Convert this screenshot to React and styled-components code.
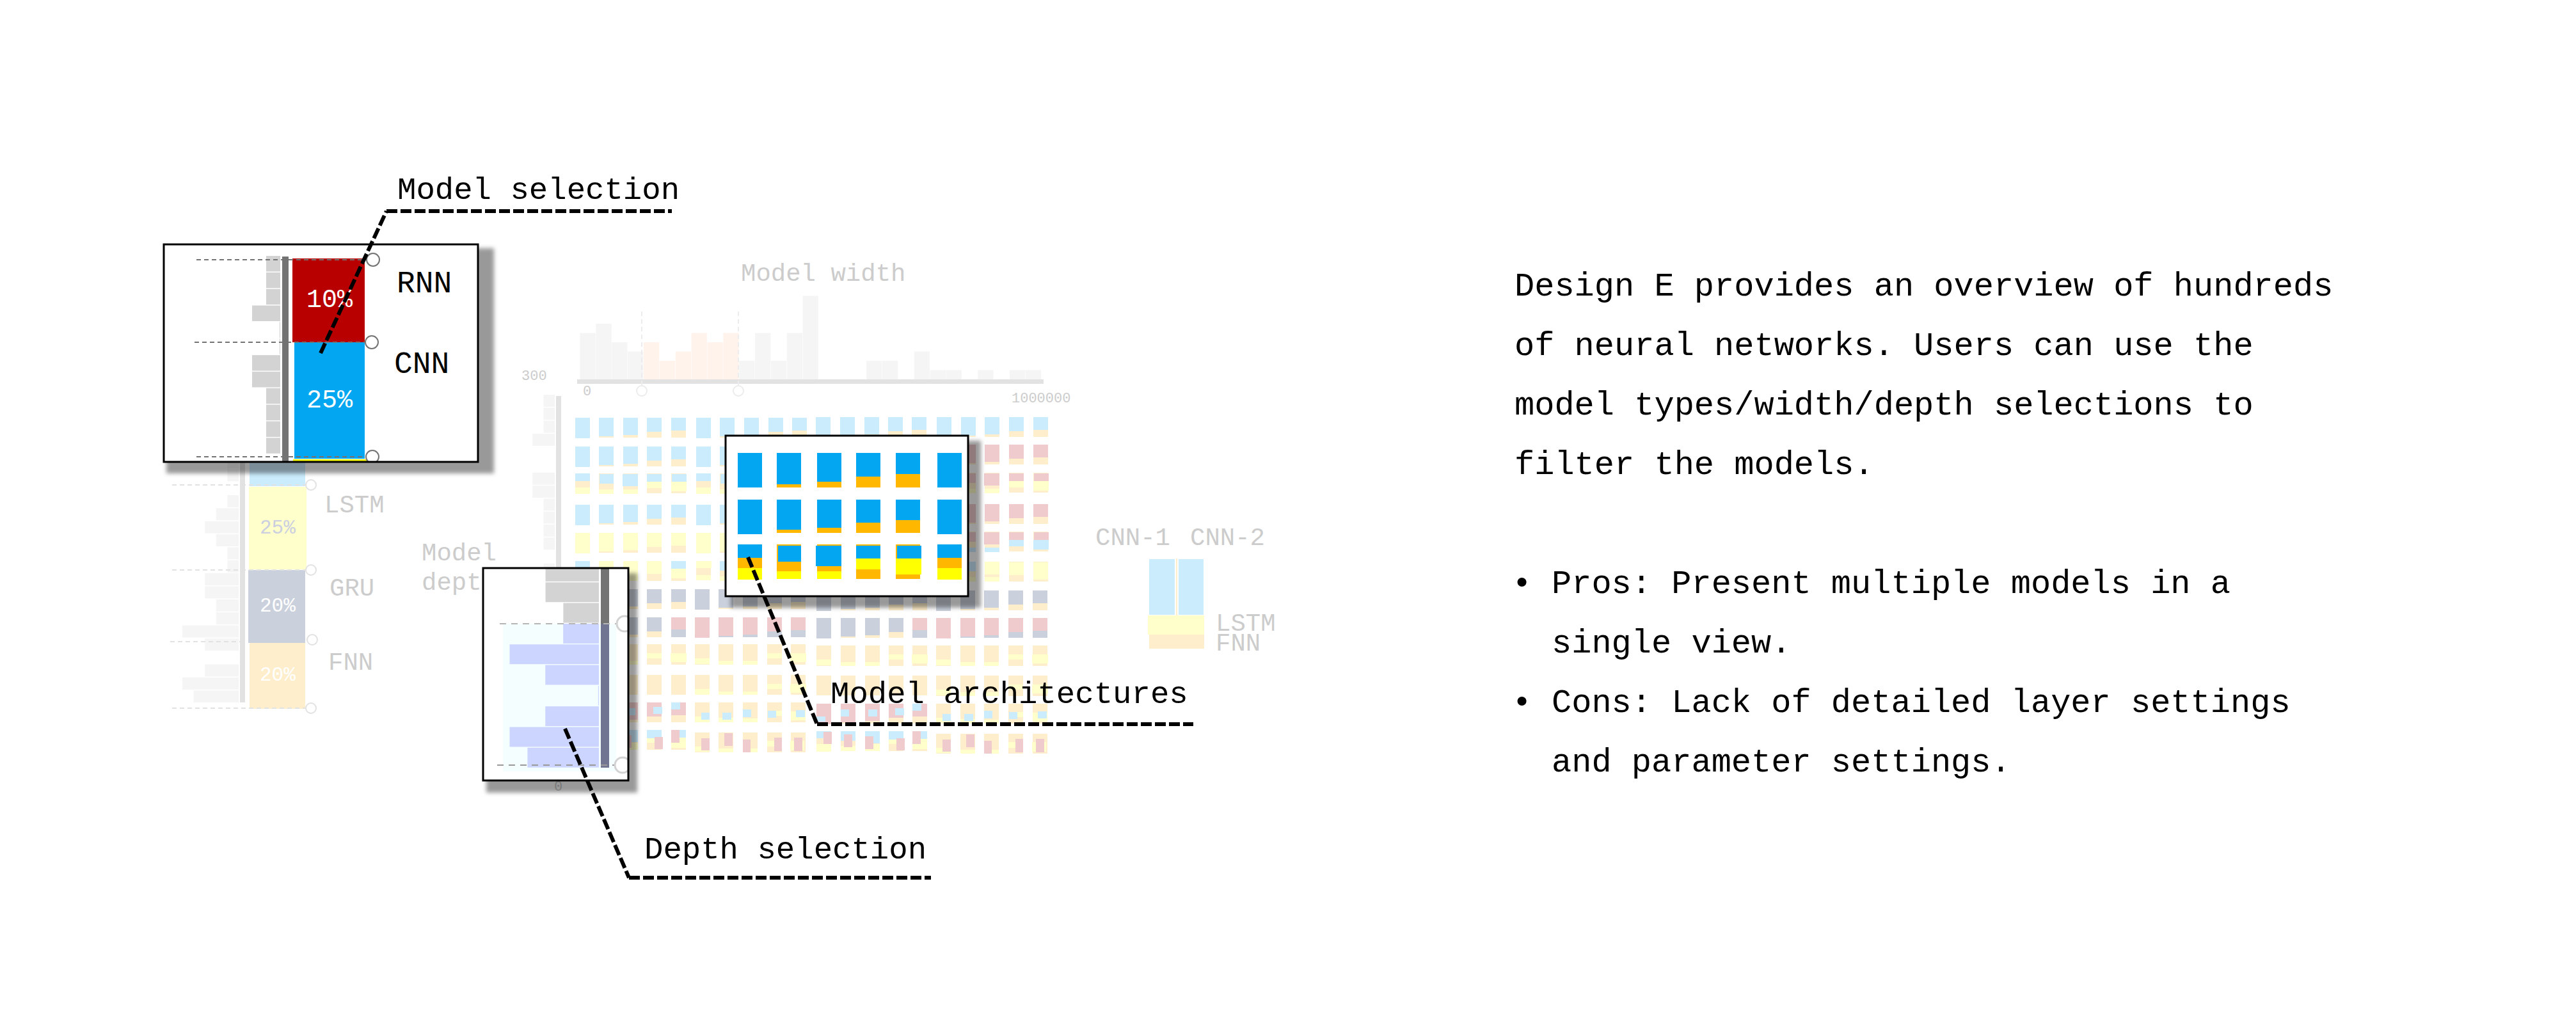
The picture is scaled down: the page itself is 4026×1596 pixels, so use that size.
import React from "react";
import styled, { createGlobalStyle } from "styled-components";

const GlobalStyle = createGlobalStyle`
  *, *::before, *::after { box-sizing: border-box; }
  body {
    margin: 0;
    background: #ffffff;
    color: #000000;
    font-family: "Liberation Mono", "Courier New", monospace;
  }
`;

const Page = styled.main`
  display: grid;
  grid-template-columns: 1fr 1fr;
  align-items: start;
`;

const Figure = styled.figure`
  margin: 0;
`;

const Drawing = styled.svg`
  display: block;
  width: 100%;
  height: auto;
`;

const Description = styled.article`
  padding: 402px 0 0 354px;
  font-size: 52px;
  line-height: 93px;
`;

const Summary = styled.p`
  max-width: 1300px;
  margin: 0 0 93px;
`;

const Points = styled.ul`
  max-width: 1300px;
  margin: 0;
  padding: 0;
  list-style: none;
`;

const Point = styled.li`
  display: grid;
  grid-template-columns: 58px 1fr;

  &::before {
    content: "•";
    margin-left: -4px;
  }
`;

const Label = styled.text`
  font-size: ${(p) => p.$size}px;
  fill: ${(p) => p.$color || "#cccccc"};
`;

const Guide = styled.line`
  stroke: ${(p) => p.$color};
  stroke-width: 2;
  stroke-dasharray: ${(p) => p.$dash || "7 5"};
`;

const Handle = styled.circle`
  fill: #ffffff;
  stroke: ${(p) => p.$color};
  stroke-width: ${(p) => p.$stroke || 2};
`;

const Leader = styled.path`
  fill: none;
  stroke: #000000;
  stroke-width: 6;
  stroke-dasharray: 17 5;
`;

const Frame = styled.rect`
  fill: ${(p) => (p.$paper ? "#ffffff" : "none")};
  stroke: #000000;
  stroke-width: ${(p) => (p.$paper ? 0 : 3)};
`;

const Shadow = styled.rect`
  fill: rgba(0, 0, 0, 0.4);
  filter: blur(3px);
`;

const pale = {
  b: "#cbecfd",
  o: "#feeecb",
  y: "#ffffcb",
  r: "#f0cbcd",
  s: "#cbd1dc",
};
const vivid = { b: "#03a6f0", o: "#ffb700", y: "#ffff00", r: "#b80000" };

/* Bars that grow leftwards from a vertical axis. */
function SideBars({ right, top, pitch, unit, values, fill }) {
  return values.map((v, i) =>
    v ? (
      <rect
        key={i}
        x={right - v * unit}
        y={top + i * pitch}
        width={v * unit}
        height={pitch - 1.4}
        fill={fill}
      />
    ) : null
  );
}

/* A cell is a list of [colour, x, y, width, height] blocks. */
function Cell({ x, y, blocks, palette }) {
  return blocks.map(([c, bx, by, w, h], i) => (
    <rect key={i} x={x + bx} y={y + by} width={w} height={h} fill={palette[c]} />
  ));
}

const W = 23;
const H = 31;
const bands = (...parts) => {
  let y = 0;
  return parts.map(([c, end]) => {
    const block = [c, 0, y, W, end - y];
    y = end;
    return block;
  });
};
const pair = (top, base) => [
  bands([top, 32]),
  bands([top, 29], [base, H]),
  bands([top, 27], [base, H]),
  bands([top, 22], [base, H]),
  bands([top, 20], [base, H]),
];
const triple = (a, b) => [
  bands([a, 12], ["o", 22], [b, 32]),
  [["o", 0, 0, W, H], [a, 1, 1, 22, 15], [b, 0, 25, W, 7]],
  [["o", 0, 0, W, H], [a, -1, 1, 24, 19], [b, 0, 25, W, 7]],
  [["o", 0, 0, W, H], [a, 0, 1, W, 12], [b, 0, 13, W, 10]],
  [["o", 0, 0, W, H], [a, 1, 1, W, 12], [b, 0, 13, 24, 15]],
];
const ySix = [
  [["y", 0, 0, 24, 11], ["o", 0, 11, W, 19], ["y", 0, 22, W, 8]],
  bands(["b", 15], ["o", 24], ["y", H]),
  bands(["y", 20], ["o", 24], ["y", H]),
  bands(["o", 1], ["y", 21], ["o", H]),
  bands(["o", 1], ["y", 28], ["o", H]),
];
const slateRed = [
  bands(["s", 32]),
  bands(["s", 29], ["o", H]),
  bands(["s", 27], ["o", H]),
  bands(["s", 22], ["o", H]),
  bands(["r", 19], ["s", H]),
];
const sand = [
  bands(["o", 22], ["y", 31], ["o", 32]),
  bands(["o", 26], ["y", 32]),
  bands(["o", 26], ["y", 32]),
  bands(["o", 14], ["y", 22], ["o", 32]),
  [["o", 0, 0, W, 32], ["y", -1, 14, 25, 14]],
];
const sandPlain = [0, 1, 2, 3, 4].map(() => bands(["o", H]));
const redPatch = [
  [["r", 0, 0, W, 32], ["b", 0, 20, 14, 8]],
  [["r", 0, 0, W, 29], ["o", 0, 29, W, 2], ["b", 0, 9, 13, 11]],
  [["r", 0, 0, W, 27], ["o", 0, 27, W, 4], ["b", 5, 9, 14, 11]],
  [["r", 0, 0, W, 22], ["o", 0, 22, W, 9], ["b", 10, 7, 14, 11]],
  [["r", 0, 0, W, 20], ["o", 0, 20, W, 11], ["b", 0, 0, 14, 11]],
];
const sandPatch = [
  [["o", 0, 0, W, H], ["y", 0, 22, W, 9], ["b", 10, 16, 13, 11]],
  [["o", 0, 0, W, H], ["y", 0, 24, W, 7], ["b", 6, 16, 14, 11]],
  [["o", 0, 0, W, H], ["y", 0, 25, W, 6], ["b", 0, 11, 13, 12]],
  [["o", 0, 0, W, H], ["y", 13, 13, 10, 8], ["b", 1, 13, 13, 11]],
  [["o", 0, 0, W, H], ["y", 0, 14, W, 14], ["b", 8, 12, 14, 11]],
];
const bluePatch = [
  [["b", 0, 0, W, 11], ["o", 0, 11, W, 9], ["y", 0, 20, W, 12], ["r", 11, 1, 13, 19]],
  [["b", 0, 0, W, 15], ["o", 0, 15, W, 8], ["y", 0, 23, W, 8], ["r", 5, 5, 13, 20]],
  [["b", 0, 0, W, 19], ["o", 0, 19, W, 5], ["y", 0, 20, W, 11], ["r", 0, 8, 13, 20]],
  [["b", 0, 0, W, 13], ["y", 0, 13, W, 8], ["o", 0, 20, W, 11], ["r", 12, 11, 13, 19]],
  [["r", 0, 0, 13, 20], ["b", 13, 0, 10, 12], ["o", 0, 20, W, 11], ["y", 13, 12, 10, 15], ["y", 0, 20, W, 8]],
];
const redBlock = [
  [["o", 0, 0, W, H], ["y", 0, 22, W, 8], ["r", 10, 9, 13, 19]],
  [["o", 0, 0, W, H], ["y", 0, 25, W, 6], ["r", 9, 1, 13, 20]],
  [["o", 0, 0, W, H], ["y", 12, 25, 11, 6], ["r", 0, 11, 12, 20]],
  [["o", 0, 0, W, H], ["y", 0, 13, 12, 9], ["r", 11, 8, 12, 21]],
  [["o", 0, 0, W, H], ["y", -1, 13, 22, 15], ["r", 5, 8, 13, 21]],
];

/* Each row: top of its left and right halves, then the four groups of five. */
const rows = [
  [653, 652, pair("b", "o"), pair("b", "o"), pair("b", "o"), pair("b", "o")],
  [698, 695, pair("b", "o"), pair("b", "o"), pair("b", "o"), pair("r", "o")],
  [740, 739, triple("b", "y"), triple("b", "y"), triple("b", "y"), triple("r", "y")],
  [789, 788, pair("b", "o"), pair("b", "o"), pair("b", "o"), pair("r", "o")],
  [833, 831, pair("y", "o"), pair("y", "o"), pair("y", "o"), triple("r", "b")],
  [877, 878,
    [bands(["b", 12], ["y", H]), bands(["y", H]), bands(["y", H]), bands(["y", 20], ["o", H]), bands(["b", 12], ["y", 27], ["o", H])],
    ySix, ySix, ySix],
  [921, 923, pair("s", "o"), pair("s", "o"), pair("s", "o"), pair("s", "o")],
  [965, 966, slateRed, pair("r", "s"), slateRed, pair("r", "s")],
  [1007, 1009, sand, sand, sand, sand],
  [1055, 1056, sandPlain, sand.map((c) => c.map(([k, x, y, w, h]) => [k, x, y, w, Math.min(h, H - y)])), sandPlain, sand],
  [1098, 1100, redPatch, sandPatch, redPatch, sandPatch],
  [1141, 1143, bluePatch, redBlock, bluePatch, redBlock],
];
const columns = [
  [899, 936, 974, 1011, 1049],
  [1088, 1125, 1163, 1201, 1238],
  [1275, 1313, 1351, 1388, 1425],
  [1464, 1502, 1539, 1577, 1615],
];
const lowerShift = [0, -2, 1, -1];

function ModelGrid() {
  return rows.map(([leftTop, rightTop, ...groups], r) =>
    groups.map((cells, g) =>
      cells.map((blocks, c) => (
        <Cell
          key={`${r}-${g}-${c}`}
          x={columns[g][c] + (r > 5 ? lowerShift[g] : 0)}
          y={(g < 2 ? leftTop : rightTop) + (r === 11 && g % 2 ? 4 : 0)}
          blocks={blocks}
          palette={pale}
        />
      ))
    )
  );
}

const widthBars = [5, 6, 4, 3, 4, 2, 3, 5, 4, 5, 2, 5, 2, 5, 9, 0, 0, 0, 2, 2, 0, 3, 1, 1, 0, 1, 0, 1, 1];
const typeBars = [1, 1, 0, 1, 2, 3, 2, 1, 1, 3, 3, 2, 2, 5, 3, 0, 3, 5, 4];
const depthBars = [1, 1, 1, 2, 0, 0, 2, 2, 1, 1, 1, 1, 0, 1];
const grey = "#e2e2e2";

function WidthChart() {
  return (
    <g>
      <Label $size={39} x="1158" y="439">Model width</Label>
      {widthBars.map((v, i) => (
        <rect
          key={i}
          x={906.5 + i * 24.87}
          y={593 - v * 14.5}
          width="24.3"
          height={v * 14.5}
          fill={i > 3 && i < 10 ? "#fff3ec" : "#f5f5f5"}
        />
      ))}
      <rect x="902" y="593" width="729" height="7" fill={grey} />
      {[1003, 1154].map((x) => (
        <g key={x}>
          <Guide $color="#ececec" x1={x} y1="487" x2={x} y2="603" />
          <Handle $color="#ececec" cx={x} cy="611" r="8" />
        </g>
      ))}
      <Label $size={22} x="815" y="594">300</Label>
      <Label $size={22} x="911" y="618">0</Label>
      <Label $size={22} x="1581" y="629">1000000</Label>
    </g>
  );
}

function DepthChart() {
  return (
    <g>
      <Label $size={39} x="659" y="876">Model</Label>
      <Label $size={39} x="659" y="922">depth</Label>
      <SideBars right={867} top={617} pitch={20.3} unit={17.4} values={depthBars} fill="#f5f5f5" />
      <rect x="869" y="619" width="8" height="600" fill={grey} />
      <Label $size={22} x="866" y="1236">0</Label>
    </g>
  );
}

function TypeChart() {
  return (
    <g>
      <SideBars right={373} top={713} pitch={20.35} unit={17.6} values={typeBars} fill="#f5f5f5" />
      <rect x="375" y="700" width="8" height="398" fill={grey} />
      <rect x="390" y="700" width="87" height="60" fill={pale.b} />
      <rect x="389" y="761" width="90" height="129" fill={pale.y} />
      <rect x="388" y="891" width="89" height="114" fill={pale.s} />
      <rect x="390" y="1005" width="87" height="103" fill={pale.o} />
      {[[269, 478, 758, 486, 758], [269, 478, 891, 486, 891], [266, 386, 1003, 488, 1000], [269, 478, 1107, 486, 1107]].map(
        ([x1, x2, y, cx, cy]) => (
          <g key={y}>
            <Guide $color={grey} x1={x1} y1={y} x2={x2} y2={y} />
            <Handle $color={grey} cx={cx} cy={cy} r="8" />
          </g>
        )
      )}
      <Label $size={31} $color="#cbcfe0" x="406" y="834">25%</Label>
      <Label $size={31} $color="#ffffff" x="406" y="956">20%</Label>
      <Label $size={31} $color="#ffffff" x="406" y="1064">20%</Label>
      <Label $size={39} x="507" y="801">LSTM</Label>
      <Label $size={39} x="515" y="931">GRU</Label>
      <Label $size={39} x="513" y="1047">FNN</Label>
    </g>
  );
}

function Legend() {
  return (
    <g>
      <Label $size={39} x="1712" y="852">CNN-1</Label>
      <Label $size={39} x="1860" y="852">CNN-2</Label>
      <rect x="1796" y="874" width="40" height="87" fill={pale.b} />
      <rect x="1838" y="873" width="2" height="89" fill={pale.o} />
      <rect x="1842" y="874" width="39" height="87" fill={pale.b} />
      <rect x="1794" y="962" width="88" height="30" fill={pale.y} />
      <rect x="1796" y="992" width="86" height="22" fill={pale.o} />
      <Label $size={39} x="1900" y="986">LSTM</Label>
      <Label $size={39} x="1900" y="1017">FNN</Label>
    </g>
  );
}

/* Enlarged view: paper, soft shadow, clipped content, then the frame. */
function Inset({ id, x, y, width, height, shadow, children }) {
  const box = { x, y, width, height };
  return (
    <g>
      <Shadow x={shadow[0]} y={shadow[1]} width={shadow[2]} height={shadow[3]} />
      <clipPath id={id}>
        <rect {...box} />
      </clipPath>
      <Frame $paper {...box} />
      <g clipPath={`url(#${id})`}>{children}</g>
      <Frame {...box} />
    </g>
  );
}

function TypeInset() {
  return (
    <Inset id="type-view" x={256} y={382} width={491} height={340} shadow={[260, 388, 512, 352]}>
      <SideBars right={438} top={400} pitch={25.85} unit={22} values={[1, 1, 1, 2, 0.05, 0.05, 2, 2, 1, 1, 1, 1]} fill="#d3d3d3" />
      <rect x="441" y="401" width="10" height="330" fill="#737373" />
      <rect x="457" y="404" width="113" height="131" fill={vivid.r} />
      <rect x="460" y="535" width="110" height="182" fill={vivid.b} />
      <rect x="458" y="718" width="115" height="12" fill={vivid.y} />
      {[[307, 572, 406, 583], [304, 570, 535, 581], [307, 571, 714, 582]].map(([x1, x2, y, cx]) => (
        <g key={y}>
          <Guide $color="#737373" x1={x1} y1={y} x2={x2} y2={y} />
          <Handle $color="#737373" cx={cx} cy={y} r="10" />
        </g>
      ))}
      <Label $size={40} $color="#ffffff" x="479" y="480">10%</Label>
      <Label $size={40} $color="#ffffff" x="479" y="637">25%</Label>
      <Label $size={48} $color="#000000" x="620" y="457">RNN</Label>
      <Label $size={48} $color="#000000" x="616" y="583">CNN</Label>
    </Inset>
  );
}

function DepthInset() {
  return (
    <Inset id="depth-view" x={755} y={888} width={227} height={332} shadow={[760, 896, 236, 343]}>
      <rect x="786" y="975" width="177" height="231" fill="#f5feff" />
      <SideBars right={936} top={878} pitch={32.3} unit={27.8} values={[3, 3, 2]} fill="#d3d3d3" />
      <SideBars right={936} top={975} pitch={32.3} unit={27.9} values={[2, 5, 3, 0.04, 3, 5, 4]} fill="#cbd5ff" />
      <rect x="939" y="888" width="13" height="87" fill="#737373" />
      <rect x="939" y="975" width="13" height="225" fill="#717591" />
      <Guide $color="#b5b5b5" $dash="10 8" x1="781" y1="975" x2="964" y2="975" />
      <Guide $color="#999999" $dash="10 8" x1="777" y1="1196" x2="960" y2="1196" />
      <Handle $color="#d3d3d3" $stroke={3} cx="976" cy="975" r="12" />
      <Handle $color="#d3d3d3" $stroke={3} cx="973" cy="1196" r="12" />
    </Inset>
  );
}

const bigColumns = [1153, 1214, 1277, 1338, 1400, 1465];
const big = (blocks) => blocks.map(([c, x, y, h, w = 38]) => [c, x, y, w, h]);
const bigSplit = (full, end, splits) =>
  splits.map((s) => big(s ? [["b", 0, 0, s], ["o", 0, s, end - s]] : [["b", 0, 0, full]]));
const bigMixed = [
  [["b", 0, 0, 21], ["o", 0, 21, 16], ["y", 0, 37, 18]],
  [["o", 0, 0, 54], ["b", 2, 2, 25, 36], ["y", 0, 42, 12]],
  [["o", 0, 0, 54], ["b", -2, 2, 32, 40], ["y", 0, 42, 12]],
  [["o", 0, 0, 54], ["b", 0, 2, 20], ["y", 0, 22, 17]],
  [["o", 0, 0, 54], ["b", 2, 2, 20], ["y", 0, 22, 25, 40]],
  [["b", 0, 0, 21], ["o", 0, 21, 16], ["y", 0, 37, 18]],
].map(big);
const bigRows = [
  [708, bigSplit(54, 54, [0, 49, 45, 37, 33, 0])],
  [781, bigSplit(54, 52, [0, 47, 44, 36, 32, 0])],
  [851, bigMixed],
];

function ArchitectureInset() {
  return (
    <Inset id="architecture-view" x={1134} y={681} width={379} height={251} shadow={[1142, 689, 391, 261]}>
      {bigRows.map(([y, cells]) =>
        cells.map((blocks, i) => (
          <Cell key={`${y}-${i}`} x={bigColumns[i]} y={y} blocks={blocks} palette={vivid} />
        ))
      )}
    </Inset>
  );
}

function Callout({ x, y, d, turn, end, children }) {
  return (
    <g>
      <Leader d={`M${d} L${turn}`} />
      <Leader d={`M${turn} H${end}`} />
      <Label $size={49} $color="#000000" x={x} y={y}>{children}</Label>
    </g>
  );
}

export default function App() {
  return (
    <>
      <GlobalStyle />
      <Page>
        <Figure>
          <Drawing viewBox="0 0 2013 1596" role="img" aria-label="Design E overview with model, depth and architecture views">
            <WidthChart />
            <DepthChart />
            <TypeChart />
            <ModelGrid />
            <Legend />
            <TypeInset />
            <ArchitectureInset />
            <DepthInset />
            <Callout x={621} y={311} d="501,552" turn="604,330" end={1050}>Model selection</Callout>
            <Callout x={1298} y={1099} d="1169,871" turn="1277,1132" end={1865}>Model architectures</Callout>
            <Callout x={1007} y={1342} d="883,1139" turn="983,1372" end={1455}>Depth selection</Callout>
          </Drawing>
        </Figure>
        <Description>
          <Summary>
            Design E provides an overview of hundreds of neural networks. Users can use the model
            types/width/depth selections to filter the models.
          </Summary>
          <Points>
            <Point>Pros: Present multiple models in a single view.</Point>
            <Point>Cons: Lack of detailed layer settings and parameter settings.</Point>
          </Points>
        </Description>
      </Page>
    </>
  );
}
